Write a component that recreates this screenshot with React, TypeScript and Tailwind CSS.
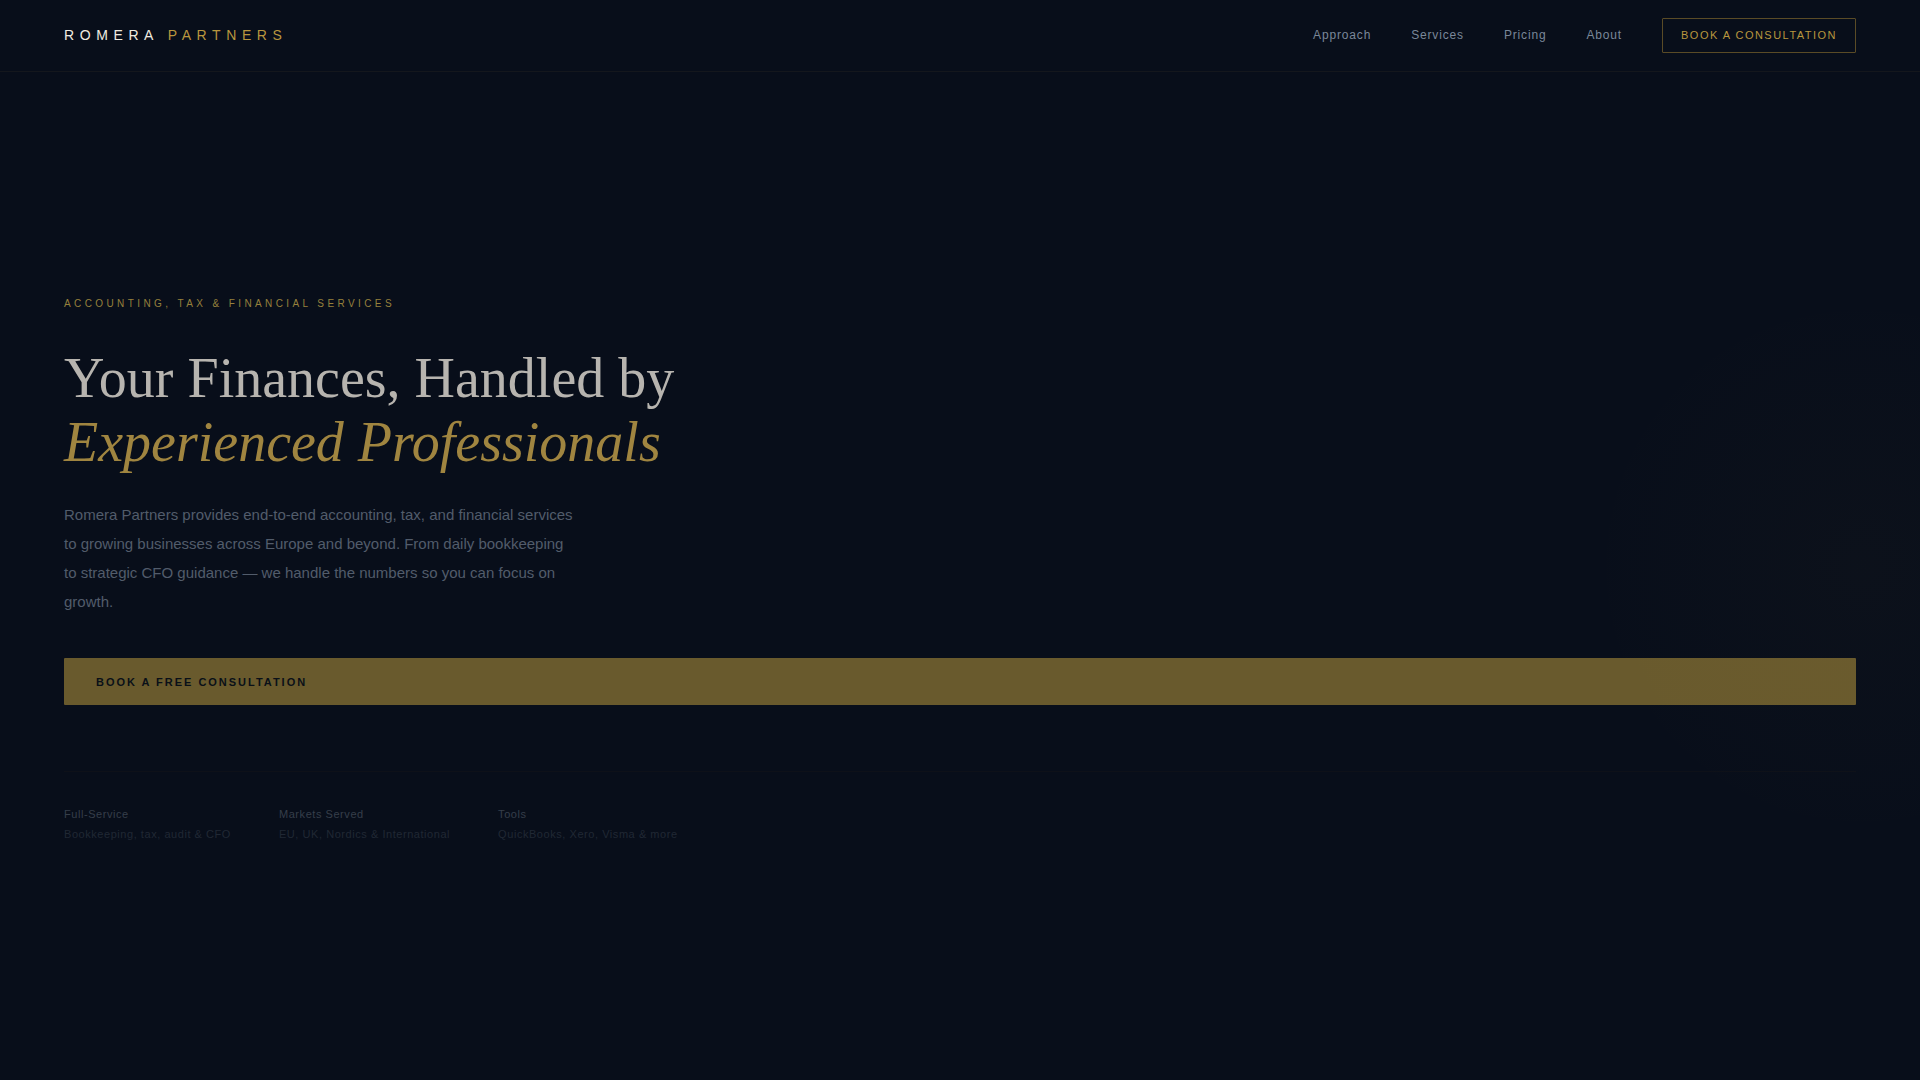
const links = ['Approach', 'Services', 'Pricing', 'About'];

const stats = [
  { label: 'Full-Service', value: 'Bookkeeping, tax, audit & CFO' },
  { label: 'Markets Served', value: 'EU, UK, Nordics & International' },
  { label: 'Tools', value: 'QuickBooks, Xero, Visma & more' },
];

function Header() {
  return (
    <header className="flex items-center justify-between border-b border-[#14171d] px-16 py-[18px]">
      <a href="#top" className="pb-0.5 text-sm tracking-[0.4em] text-[#f0ebe0]">
        ROMERA <span className="text-[#b8963e]">PARTNERS</span>
      </a>
      <nav className="flex items-center gap-10">
        {links.map((link) => (
          <a key={link} href={`#${link.toLowerCase()}`} className="pb-0.5 text-xs tracking-[0.07em] text-[#7a8799]">
            {link}
          </a>
        ))}
        <a
          href="#contact"
          className="rounded-[1px] border border-[#5a4b26] px-[18px] py-2 text-[11px] leading-[17px] tracking-[0.135em] text-[#b8963e]"
        >
          BOOK A CONSULTATION
        </a>
      </nav>
    </header>
  );
}

function Hero() {
  return (
    <section className="relative flex grow flex-col justify-center overflow-hidden px-16 pb-3">
      {/* soft gold glow on the right edge */}
      <div className="pointer-events-none absolute top-[49%] right-[3%] size-[800px] translate-x-1/2 -translate-y-1/2 bg-[radial-gradient(circle_closest-side,rgba(184,150,62,0.025),transparent_70%)]" />
      <p className="mb-[34px] text-[10px] leading-4 tracking-[0.34em] text-[#96803c]">
        ACCOUNTING, TAX &amp; FINANCIAL SERVICES
      </p>
      <h1 className="mb-[26px] font-['Liberation_Serif',serif] text-[56px] leading-[64px] text-[#b7b4af]">
        Your Finances, Handled by
        <br />
        <em className="text-[#a08540]">Experienced Professionals</em>
      </h1>
      <p className="mb-[42px] max-w-lg text-[15px] leading-[29px] text-[#525c6b]">
        Romera Partners provides end-to-end accounting, tax, and financial services to growing businesses across
        Europe and beyond. From daily bookkeeping to strategic CFO guidance — we handle the numbers so you can focus
        on growth.
      </p>
      <a
        href="#contact"
        className="rounded-[1px] bg-[#695a2d] px-8 pt-4 pb-3.5 text-[11px] leading-[17px] font-bold tracking-[0.18em] text-[#0a1018]"
      >
        BOOK A FREE CONSULTATION
      </a>
      <dl className="mt-[66px] flex gap-12 border-t border-[#0e1119] pt-8 text-[11px] leading-5 tracking-[0.05em]">
        {stats.map((stat) => (
          <div key={stat.label}>
            <dt className="text-[#363e4a]">{stat.label}</dt>
            <dd className="text-[#202834]">{stat.value}</dd>
          </div>
        ))}
      </dl>
    </section>
  );
}

export default function App() {
  return (
    <div id="top" className="flex min-h-screen flex-col bg-[#080e1a] font-['Liberation_Sans',sans-serif]">
      <Header />
      <Hero />
    </div>
  );
}
